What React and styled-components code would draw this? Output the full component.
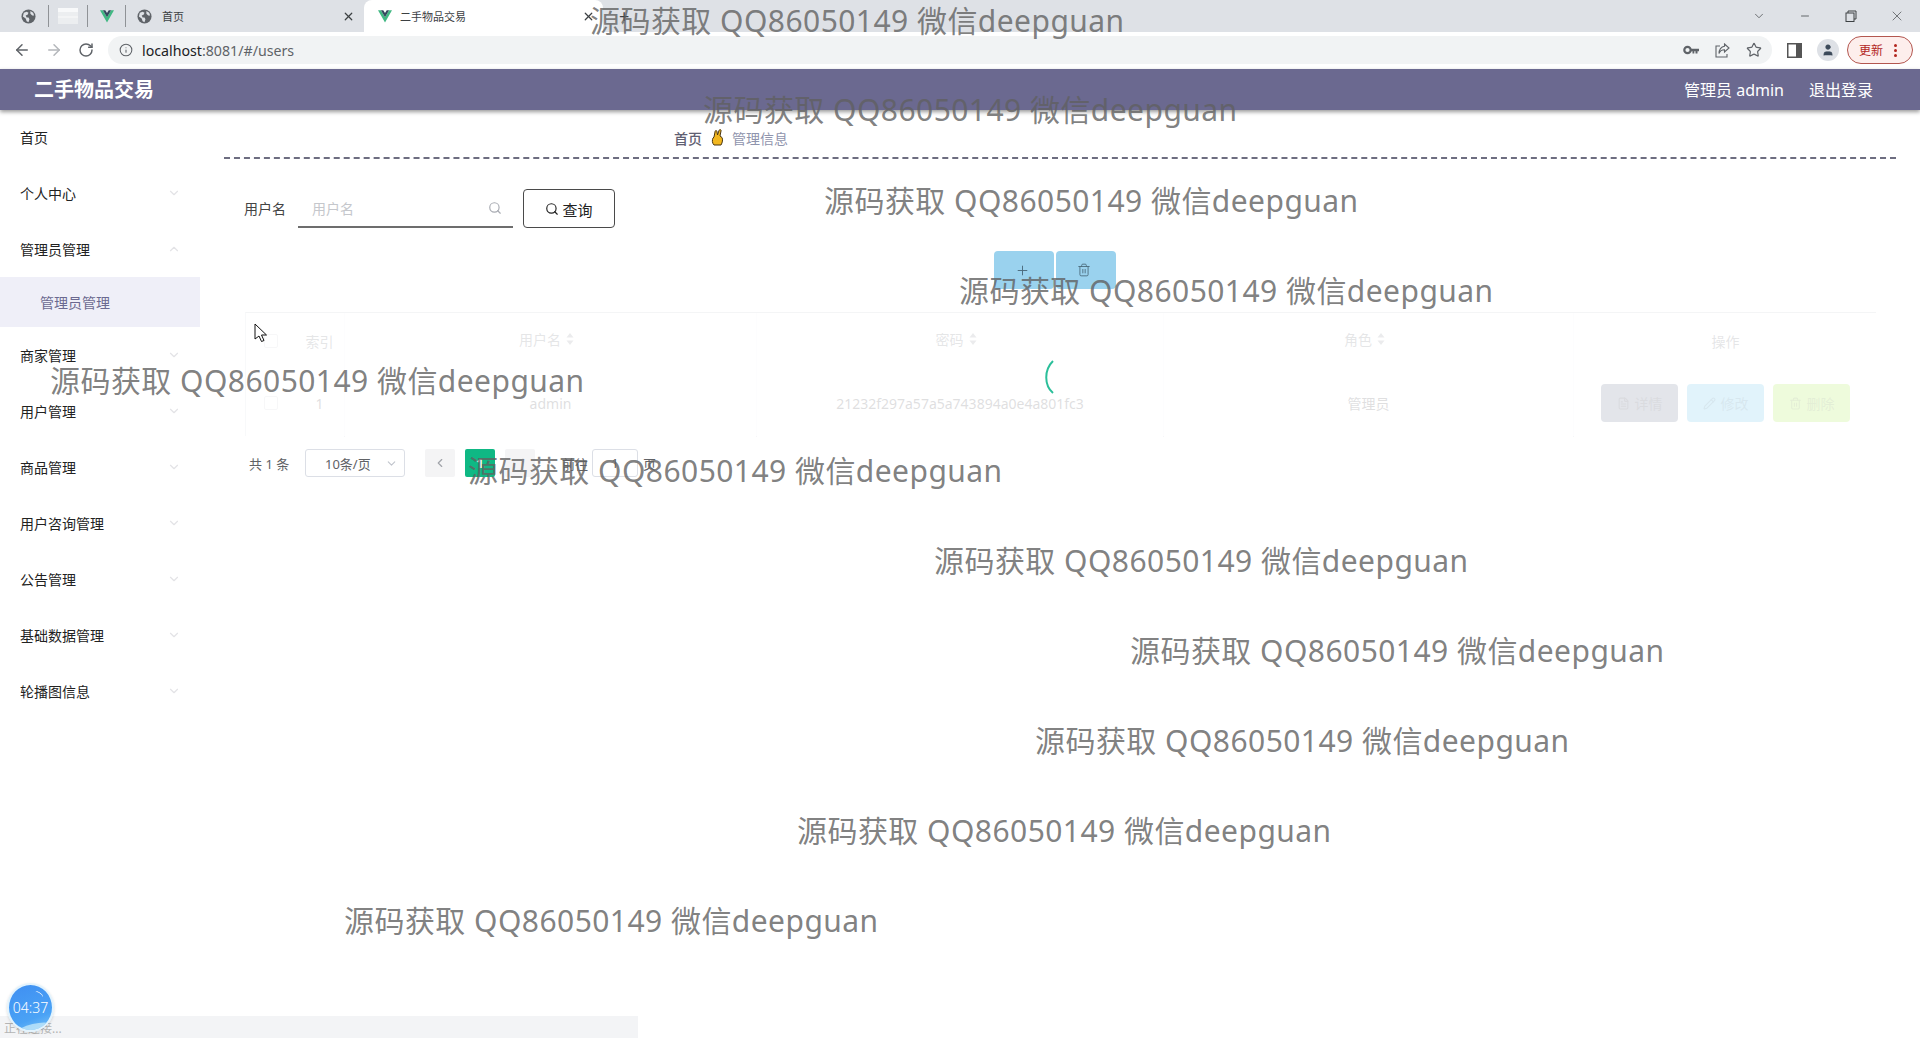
import React from "react";
import styled, { createGlobalStyle } from "styled-components";
import { ChevronDown, ChevronUp, ChevronLeft, Search, Plus, Trash2, FileText, Pencil, ArrowLeft, ArrowRight, RotateCw, Info, Star, User, X, Minus } from "lucide-react";

const Global = createGlobalStyle`
  html, body { margin: 0; padding: 0; background: #fff; }
  body { font-family: "Noto Sans", "Noto Sans CJK SC", sans-serif; overflow: hidden; }
  * { box-sizing: border-box; }
`;

const Page = styled.div`
  position: relative; width: 1920px; height: 1038px; overflow: hidden; display: flex; flex-direction: column;
`;

/* ---------- browser chrome ---------- */
const TabStrip = styled.div`
  height: 32px; background: #dee1e6; display: flex; align-items: center; flex: none;
`;
const PinnedSlot = styled.div`
  width: ${p => p.$w}px; height: 32px; padding-left: ${p => p.$pl || 0}px; display: flex; align-items: center; justify-content: center; flex: none;
`;
const TabDivider = styled.div`
  width: 1px; height: 22px; background: #8f9296; flex: none;
`;
const InactiveTab = styled.div`
  width: 238px; height: 32px; display: flex; align-items: center; padding-left: 11px; flex: none;
`;
const ActiveTab = styled.div`
  width: 239px; height: 32px; background: #fff; border-radius: 8px 8px 0 0; display: flex; align-items: center; padding-left: 14px; flex: none;
`;
const TabTitle = styled.span`
  font-size: 11px; color: #3c4043; margin-left: ${p => p.$ml}px; flex: 1; white-space: nowrap;
`;
const TabClose = styled.span`
  width: 16px; height: 16px; margin-right: ${p => p.$mr}px; display: flex; align-items: center; justify-content: center; color: #3c4043;
`;
const NewTab = styled.span`
  margin-left: 16px; font-size: 18px; line-height: 18px; color: #3c4043;
`;
const WindowControls = styled.div`
  margin-left: auto; display: flex; align-items: center; color: #3c4043;
`;
const WindowButton = styled.span`
  width: 46px; display: flex; justify-content: center; align-items: center;
`;
const Toolbar = styled.div`
  height: 37px; background: #fff; display: flex; align-items: center; flex: none; padding-bottom: 1px;
`;
const NavButton = styled.span`
  width: 32px; display: flex; justify-content: center; color: ${p => p.$off ? "#b4b7bb" : "#5f6368"};
  &:first-child { margin-left: 6px; }
`;
const AddressPill = styled.div`
  margin-left: 6px; width: 1664px; height: 28px; background: #f1f3f4; border-radius: 14px; display: flex; align-items: center; padding: 0 10px 0 11px; color: #5f6368;
`;
const Url = styled.span`
  margin-left: 9px; font-size: 14.2px; color: #5f6368; font-family: "Noto Sans", sans-serif;
  b { font-weight: 400; color: #202124; }
`;
const PillIcons = styled.div`
  margin-left: auto; display: flex; gap: 16px; align-items: center;
`;
const ToolRight = styled.div`
  display: flex; align-items: center; margin-left: 15px;
`;
const Avatar = styled.span`
  width: 22px; height: 22px; border-radius: 50%; background: #dee1e6; margin-left: 15px; display: flex; align-items: center; justify-content: center; color: #3c4a5a;
`;
const UpdatePill = styled.div`
  margin-left: 8px; width: 66px; height: 28px; border-radius: 14px; border: 1px solid #b3564f; background: #fdeeec; display: flex; align-items: center; padding-left: 11px; font-size: 12px; color: #b3261e;
`;
const Dots = styled.span`
  margin-left: 11px; display: flex; flex-direction: column; gap: 2px;
  i { width: 3px; height: 3px; border-radius: 50%; background: #b3261e; display: block; }
`;

/* ---------- app header ---------- */
const Header = styled.header`
  height: 41px; background: #6b6990; box-shadow: 0 2px 4px rgba(0,0,0,.4); display: flex; align-items: center; padding: 0 46px 2px 34px; flex: none; position: relative; z-index: 2; color: #fff;
`;
const Brand = styled.div`
  font-size: 20px; font-weight: 700; font-family: "Noto Sans CJK SC", sans-serif;
`;
const HeaderLink = styled.span`
  font-size: 16px; margin-left: ${p => p.$ml || 0}px; white-space: nowrap;
`;

/* ---------- body ---------- */
const Body = styled.div`
  flex: 1; display: flex; min-height: 0;
`;
const Sidebar = styled.nav`
  width: 200px; flex: none; margin-top: -1px;
`;
const MenuItem = styled.div`
  height: 56px; padding: 0 20px; display: flex; align-items: center; justify-content: space-between; font-size: 14px; color: #222;
  svg { color: #e3e3e6; margin-right: -1px; }
`;
const SubItem = styled.div`
  height: 50px; background: #efeff8; padding-left: 40px; display: flex; align-items: center; font-size: 14px; color: #6b6990;
`;
const Main = styled.main`
  flex: 1; padding: 0 24px;
`;
const Breadcrumb = styled.div`
  height: 49px; border-bottom: 2px dashed #6d6d80; display: flex; align-items: center; padding: 8px 0 0 450px; font-size: 14px;
`;
const CrumbHome = styled.span`
  color: #5f6072; font-weight: 500;
`;
const CrumbHand = styled.span`
  margin: 0 7px 0 9px; display: flex;
`;
const CrumbCurrent = styled.span`
  color: #8f94ad;
`;
const SearchBar = styled.div`
  display: flex; align-items: center; margin: 30px 0 0 20px; height: 39px;
`;
const FieldLabel = styled.label`
  font-size: 14px; color: #444; width: 54px; padding-bottom: 2px;
`;
const UnderlineInput = styled.div`
  width: 215px; height: 39px; border-bottom: 2px solid #6d6d6d; display: flex; align-items: center; justify-content: space-between; padding: 0 11px 0 14px; font-size: 14px; color: #c5c7cc;
  svg { color: #a8abb2; }
`;
const QueryButton = styled.button`
  margin-left: 10px; width: 92px; height: 39px; background: #fff; border: 1px solid #4a4a4a; border-radius: 4px; display: flex; align-items: center; justify-content: center; gap: 3px; font-size: 15px; color: #222; font-family: inherit; padding: 1px 0 0;
`;
const ActionBar = styled.div`
  display: flex; gap: 2px; margin: 23px 0 0 770px;
`;
const ActionButton = styled.button`
  width: 60px; height: 38px; background: #9ad2ee; border: 0; border-radius: 4px; display: flex; align-items: center; justify-content: center; color: #4a6a7c; padding: 0 4px 0 0;
`;
const TableWrap = styled.div`
  position: relative; margin: 23px 0 0 21px; width: 1631px; height: 124px;
`;
const Table = styled.div`
  display: grid; grid-template-columns: 49px 50px 412px 407px 410px 303px; grid-template-rows: 56px 68px; border-top: 1px solid #c8cbd2; border-left: 1px solid #dcdee3; height: 100%;
`;
const HeadCell = styled.div`
  display: flex; align-items: center; justify-content: center; gap: 5px; font-size: 14px; color: #7d8088; padding: 0 ${p => p.$sort ? 8 : 0}px ${p => p.$sort ? 4 : 0}px 0;
  border-right: ${p => p.$sep ? "1px solid #f6f6f8" : 0};
`;
const BodyCell = styled.div`
  display: flex; align-items: center; justify-content: center; font-size: 14px; color: #606266; gap: 9px;
  border-right: ${p => p.$sep ? "1px solid #f6f6f8" : 0};
`;
const Checkbox = styled.span`
  width: 14px; height: 14px; border: 1px solid #d4d7dd; border-radius: 2px;
`;
const RowButton = styled.span`
  width: 77px; height: 38px; border-radius: 4px; background: ${p => p.$bg}; color: ${p => p.$fg}; display: flex; align-items: center; justify-content: center; gap: 5px; font-size: 14px;
`;
const LoadingMask = styled.div`
  position: absolute; inset: 0; background: rgba(255,255,255,.8);
`;
const Spinner = styled.svg`
  position: absolute; left: 797px; top: 45px;
`;
const Pagination = styled.div`
  display: flex; align-items: center; margin: 13px 0 0 25px; height: 28px; font-size: 13px; color: #606266;
`;
const Total = styled.span`
  width: 56px; white-space: nowrap;
`;
const SizeSelect = styled.div`
  width: 100px; height: 28px; border: 1px solid #dcdfe6; border-radius: 3px; display: flex; align-items: center; justify-content: space-between; padding: 0 6px 0 19px;
  svg { color: #c0c4cc; }
`;
const PageButton = styled.span`
  width: 30px; height: 28px; border-radius: 2px; background: ${p => p.$on ? "#0fb884" : "#f4f4f5"}; color: ${p => p.$on ? "#fff" : "#a0a3a9"}; display: flex; align-items: center; justify-content: center; margin-left: ${p => p.$ml}px; font-size: 13px; font-weight: 700;
`;
const Jump = styled.span`
  margin-left: 27px; white-space: nowrap;
`;
const JumpInput = styled.span`
  width: 46px; height: 28px; border: 1px solid #dcdfe6; border-radius: 3px; display: flex; align-items: center; justify-content: center; margin: 0 5px 0 4px;
`;

/* ---------- overlays ---------- */
const Watermark = styled.div`
  position: absolute; left: ${p => p.$x}px; top: ${p => p.$y}px; height: 40px; line-height: 40px; font-size: 30px; color: rgba(96,96,96,.8); white-space: nowrap; z-index: 5; pointer-events: none;
  font-family: "Noto Sans", "Noto Sans CJK SC", sans-serif; letter-spacing: .45px;
`;
const StatusBar = styled.div`
  position: absolute; left: 0; bottom: 0; width: 638px; height: 22px; background: #f3f4f6; font-size: 12px; color: #b4b4b4; padding: 3px 0 0 4px; z-index: 3;
`;
const TimerBubble = styled.div`
  position: absolute; left: 7px; top: 983px; width: 47px; height: 49px; border-radius: 50%; overflow: hidden; background: linear-gradient(160deg, #3f8ff2, #4aa2f5 70%, #7cc4f7); border: 2px solid #e2f3fd; color: #fff; font-size: 14px; font-weight: 300; display: flex; align-items: center; justify-content: center; z-index: 4; box-shadow: 0 1px 3px rgba(0,0,0,.15);
  &::before { content: ""; position: absolute; right: 9px; top: 7px; width: 9px; height: 5px; border-top: 1px solid rgba(255,255,255,.85); border-radius: 50%; transform: rotate(35deg); }
  &::after { content: ""; position: absolute; left: 8px; right: 2px; bottom: -2px; height: 8px; background: rgba(200,235,250,.75); border-radius: 50%; transform: rotate(-14deg); }
`;
const Cursor = styled.svg`
  position: absolute; left: 254px; top: 323px; z-index: 6;
`;

const Globe = () => (
  <svg width="15" height="15" viewBox="0 0 16 16"><circle cx="8" cy="8" r="7.5" fill="#5f6368"/><path d="M3 4l3-1 2 1-1 2-2 1 1 2 2 0 1 2-1 3-2-1-1-3-3-2zM10 2l3 2 1 3-2 0-2-2z" fill="#dee1e6"/></svg>
);
const VueMark = ({ s = 14 }) => (
  <svg width={s} height={s} viewBox="0 0 24 22"><path d="M0 1h5l7 12L19 1h5L12 22z" fill="#41b883"/><path d="M5 1h4l3 5 3-5h4l-7 12z" fill="#35495e"/></svg>
);
const Hand = () => (
  <svg width="14" height="17" viewBox="0 0 14 17"><path d="M3 16c-2-2-2-5-1-7l1-1 1-5c0-2 2-2 2 0l.5 3L8 1.5c.5-1.5 2.500-1 2 .5L9 7l2 1.500c1 2 .5 5-1 7.500z" fill="#f2b71f" stroke="#4a3510" strokeWidth="1"/></svg>
);
const SidePanel = () => (
  <svg width="15" height="15" viewBox="0 0 15 15"><rect x=".75" y=".75" width="13.500" height="13.500" fill="#fff" stroke="#555" strokeWidth="1.500"/><rect x="9" y="1" width="5" height="13" fill="#555"/></svg>
);
const Restore = () => (
  <svg width="12" height="12" viewBox="0 0 12 12" fill="none" stroke="#3c4043"><rect x="1" y="3" width="8" height="8.500"/><path d="M3 3V1h8v8H9"/></svg>
);
const MiniTab = () => (
  <svg width="20" height="16" viewBox="0 0 20 16"><rect width="20" height="16" fill="#eceef0"/><rect width="20" height="4" fill="#f8f9fa"/><path d="M0 9h20" stroke="#fafafa"/></svg>
);
const KeyIcon = () => (
  <svg width="16" height="10" viewBox="0 0 16 10"><circle cx="4.500" cy="5" r="3.200" fill="none" stroke="#5f6368" strokeWidth="2.200"/><path d="M7 3.700h9v2.600h-1.500v2.200h-2V6.300h-1.200v2.200H9.500V6.300H7z" fill="#5f6368"/></svg>
);
const ShareIcon = () => (
  <svg width="15" height="15" viewBox="0 0 15 15" fill="none" stroke="#5f6368" strokeWidth="1.100"><path d="M5 3H1v11h11v-3"/><path d="M9.500 1l4.500 4-4.500 4V6.800C7 6.800 5 8 4 10.500 4 7 6 3.500 9.500 3.200z"/></svg>
);
const SortCaret = () => (
  <svg width="8" height="12" viewBox="0 0 8 12"><path d="M4 0l3.500 4.500h-7zM4 12L.5 7.500h7z" fill="#9a9da5"/></svg>
);

const marks = [
  [590, 1], [703, 90], [824, 181], [959, 271], [50, 361], [468, 451], [934, 541], [1130, 631], [1035, 721], [797, 811], [344, 901],
];
const lower = ["商家管理", "用户管理", "商品管理", "用户咨询管理", "公告管理", "基础数据管理", "轮播图信息"];

export default function App() {
  return (
    <Page>
      <Global />
      <TabStrip>
        <PinnedSlot $w={48} $pl={8}><Globe /></PinnedSlot>
        <TabDivider />
        <PinnedSlot $w={38}><MiniTab /></PinnedSlot>
        <TabDivider />
        <PinnedSlot $w={37}><VueMark /></PinnedSlot>
        <TabDivider />
        <InactiveTab>
          <Globe />
          <TabTitle $ml={10}>首页</TabTitle>
          <TabClose $mr={8}><X size={13} strokeWidth={2.2} /></TabClose>
        </InactiveTab>
        <ActiveTab>
          <VueMark />
          <TabTitle $ml={8}>二手物品交易</TabTitle>
          <TabClose $mr={7}><X size={13} strokeWidth={2.2} /></TabClose>
        </ActiveTab>
        <NewTab>+</NewTab>
        <WindowControls>
          <WindowButton><ChevronDown size={14} strokeWidth={1.2} /></WindowButton>
          <WindowButton><Minus size={12} strokeWidth={1.5} /></WindowButton>
          <WindowButton><Restore /></WindowButton>
          <WindowButton><X size={16} strokeWidth={1} /></WindowButton>
        </WindowControls>
      </TabStrip>
      <Toolbar>
        <NavButton><ArrowLeft size={18} strokeWidth={2} /></NavButton>
        <NavButton $off><ArrowRight size={18} strokeWidth={2} /></NavButton>
        <NavButton><RotateCw size={16} strokeWidth={2.2} /></NavButton>
        <AddressPill>
          <Info size={14} strokeWidth={1.8} />
          <Url><b>localhost</b>:8081/#/users</Url>
          <PillIcons>
            <KeyIcon />
            <ShareIcon />
            <Star size={16} strokeWidth={1.8} />
          </PillIcons>
        </AddressPill>
        <ToolRight>
          <SidePanel />
          <Avatar><User size={14} fill="#3c4a5a" strokeWidth={1} /></Avatar>
          <UpdatePill>更新<Dots><i /><i /><i /></Dots></UpdatePill>
        </ToolRight>
      </Toolbar>
      <Header>
        <Brand>二手物品交易</Brand>
        <HeaderLink $ml={1530}>管理员 admin</HeaderLink>
        <HeaderLink $ml={25}>退出登录</HeaderLink>
      </Header>
      <Body>
        <Sidebar>
          <MenuItem>首页</MenuItem>
          <MenuItem>个人中心<ChevronDown size={14} /></MenuItem>
          <MenuItem>管理员管理<ChevronUp size={14} /></MenuItem>
          <SubItem>管理员管理</SubItem>
          {lower.map(m => <MenuItem key={m}>{m}<ChevronDown size={14} /></MenuItem>)}
        </Sidebar>
        <Main>
          <Breadcrumb>
            <CrumbHome>首页</CrumbHome>
            <CrumbHand><Hand /></CrumbHand>
            <CrumbCurrent>管理信息</CrumbCurrent>
          </Breadcrumb>
          <SearchBar>
            <FieldLabel>用户名</FieldLabel>
            <UnderlineInput>用户名<Search size={14} /></UnderlineInput>
            <QueryButton><Search size={14} />查询</QueryButton>
          </SearchBar>
          <ActionBar>
            <ActionButton><Plus size={15} strokeWidth={1.5} /></ActionButton>
            <ActionButton><Trash2 size={14} strokeWidth={1.5} /></ActionButton>
          </ActionBar>
          <TableWrap>
            <Table>
              <HeadCell><Checkbox /></HeadCell>
              <HeadCell $sep>索引</HeadCell>
              <HeadCell $sep $sort>用户名<SortCaret /></HeadCell>
              <HeadCell $sep $sort>密码<SortCaret /></HeadCell>
              <HeadCell $sep $sort>角色<SortCaret /></HeadCell>
              <HeadCell>操作</HeadCell>
              <BodyCell><Checkbox /></BodyCell>
              <BodyCell $sep>1</BodyCell>
              <BodyCell $sep>admin</BodyCell>
              <BodyCell $sep>21232f297a57a5a743894a0e4a801fc3</BodyCell>
              <BodyCell $sep>管理员</BodyCell>
              <BodyCell>
                <RowButton $bg="#737d96" $fg="#454b5e"><FileText size={13} />详情</RowButton>
                <RowButton $bg="#69c3eb" $fg="#3a87ad"><Pencil size={13} />修改</RowButton>
                <RowButton $bg="#aaeb50" $fg="#76a933"><Trash2 size={13} />删除</RowButton>
              </BodyCell>
            </Table>
            <LoadingMask>
              <Spinner width="42" height="42" viewBox="0 0 42 42"><path d="M11 4 C 2 13, 2 28, 11 36" fill="none" stroke="#2bbf9a" strokeWidth="2" /></Spinner>
            </LoadingMask>
          </TableWrap>
          <Pagination>
            <Total>共 1 条</Total>
            <SizeSelect>10条/页<ChevronDown size={13} /></SizeSelect>
            <PageButton $ml={20}><ChevronLeft size={14} /></PageButton>
            <PageButton $ml={10} $on>1</PageButton>
            <PageButton $ml={10}></PageButton>
            <Jump>前往</Jump>
            <JumpInput>1</JumpInput>
            <span>页</span>
          </Pagination>
        </Main>
      </Body>
      {marks.map(([x, y]) => <Watermark key={x} $x={x} $y={y}>源码获取 QQ86050149 微信deepguan</Watermark>)}
      <Cursor width="14" height="20" viewBox="0 0 14 20"><path d="M1 1v15l4-3 2.500 5.500 2.500-1L7.500 12H12.500z" fill="#fff" stroke="#111" strokeWidth="1" /></Cursor>
      <StatusBar>正在连接...</StatusBar>
      <TimerBubble>04:37</TimerBubble>
    </Page>
  );
}
